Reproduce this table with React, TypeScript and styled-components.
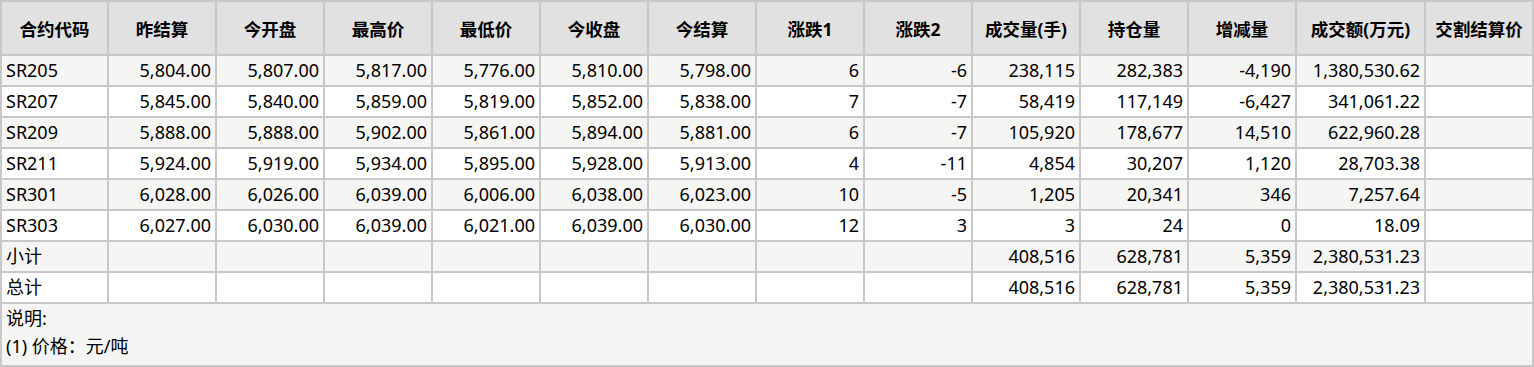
import styled, { createGlobalStyle } from "styled-components";

const GlobalStyle = createGlobalStyle`
  html, body {
    margin: 0;
    padding: 0;
    background: #ffffff;
  }
  body {
    font-family: "Noto Sans", "Noto Sans CJK SC", sans-serif;
    color: #000000;
  }
`;

const QuoteTable = styled.table`
  width: 1534px;
  border-collapse: collapse;
  table-layout: fixed;
  font-size: 18px;
`;

const HeadCell = styled.th`
  height: 52px;
  padding: 0 3px;
  background: #e1e1e1;
  border: 2px solid #c8c8c8;
  font-size: 17.5px;
  font-weight: 700;
  text-align: center;
  white-space: nowrap;
  overflow: hidden;
`;

const Row = styled.tr<{ $striped: boolean }>`
  background: ${(p) => (p.$striped ? "#f5f5f3" : "#ffffff")};
`;

const Cell = styled.td<{ $align?: "left" | "right" }>`
  height: 29px;
  padding: 0 4px;
  border: 2px solid #c8c8c8;
  text-align: ${(p) => p.$align ?? "right"};
  white-space: nowrap;
  line-height: 29px;
`;

const NoteCell = styled.td`
  padding: 0 4px 5px;
  background: #f5f5f3;
  border: 2px solid #c8c8c8;
  line-height: 28px;
`;

const headers = [
  "合约代码",
  "昨结算",
  "今开盘",
  "最高价",
  "最低价",
  "今收盘",
  "今结算",
  "涨跌1",
  "涨跌2",
  "成交量(手)",
  "持仓量",
  "增减量",
  "成交额(万元)",
  "交割结算价",
];

const widths = [107, 108, 108, 108, 108, 108, 108, 108, 108, 108, 108, 108, 129, 108];

const rows: string[][] = [
  ["SR205", "5,804.00", "5,807.00", "5,817.00", "5,776.00", "5,810.00", "5,798.00", "6", "-6", "238,115", "282,383", "-4,190", "1,380,530.62", ""],
  ["SR207", "5,845.00", "5,840.00", "5,859.00", "5,819.00", "5,852.00", "5,838.00", "7", "-7", "58,419", "117,149", "-6,427", "341,061.22", ""],
  ["SR209", "5,888.00", "5,888.00", "5,902.00", "5,861.00", "5,894.00", "5,881.00", "6", "-7", "105,920", "178,677", "14,510", "622,960.28", ""],
  ["SR211", "5,924.00", "5,919.00", "5,934.00", "5,895.00", "5,928.00", "5,913.00", "4", "-11", "4,854", "30,207", "1,120", "28,703.38", ""],
  ["SR301", "6,028.00", "6,026.00", "6,039.00", "6,006.00", "6,038.00", "6,023.00", "10", "-5", "1,205", "20,341", "346", "7,257.64", ""],
  ["SR303", "6,027.00", "6,030.00", "6,039.00", "6,021.00", "6,039.00", "6,030.00", "12", "3", "3", "24", "0", "18.09", ""],
  ["小计", "", "", "", "", "", "", "", "", "408,516", "628,781", "5,359", "2,380,531.23", ""],
  ["总计", "", "", "", "", "", "", "", "", "408,516", "628,781", "5,359", "2,380,531.23", ""],
];

export default function App() {
  return (
    <>
      <GlobalStyle />
      <QuoteTable>
        <colgroup>
          {widths.map((w, i) => (
            <col key={i} style={{ width: w }} />
          ))}
        </colgroup>
        <thead>
          <tr>
            {headers.map((h) => (
              <HeadCell key={h}>{h}</HeadCell>
            ))}
          </tr>
        </thead>
        <tbody>
          {rows.map((r, i) => (
            <Row key={r[0]} $striped={i % 2 === 0}>
              {r.map((v, j) => (
                <Cell key={j} $align={j === 0 ? "left" : "right"}>
                  {v}
                </Cell>
              ))}
            </Row>
          ))}
        </tbody>
        <tfoot>
          <tr>
            <NoteCell colSpan={14}>
              <div>说明:</div>
              <div>(1) 价格：元/吨</div>
            </NoteCell>
          </tr>
        </tfoot>
      </QuoteTable>
    </>
  );
}
